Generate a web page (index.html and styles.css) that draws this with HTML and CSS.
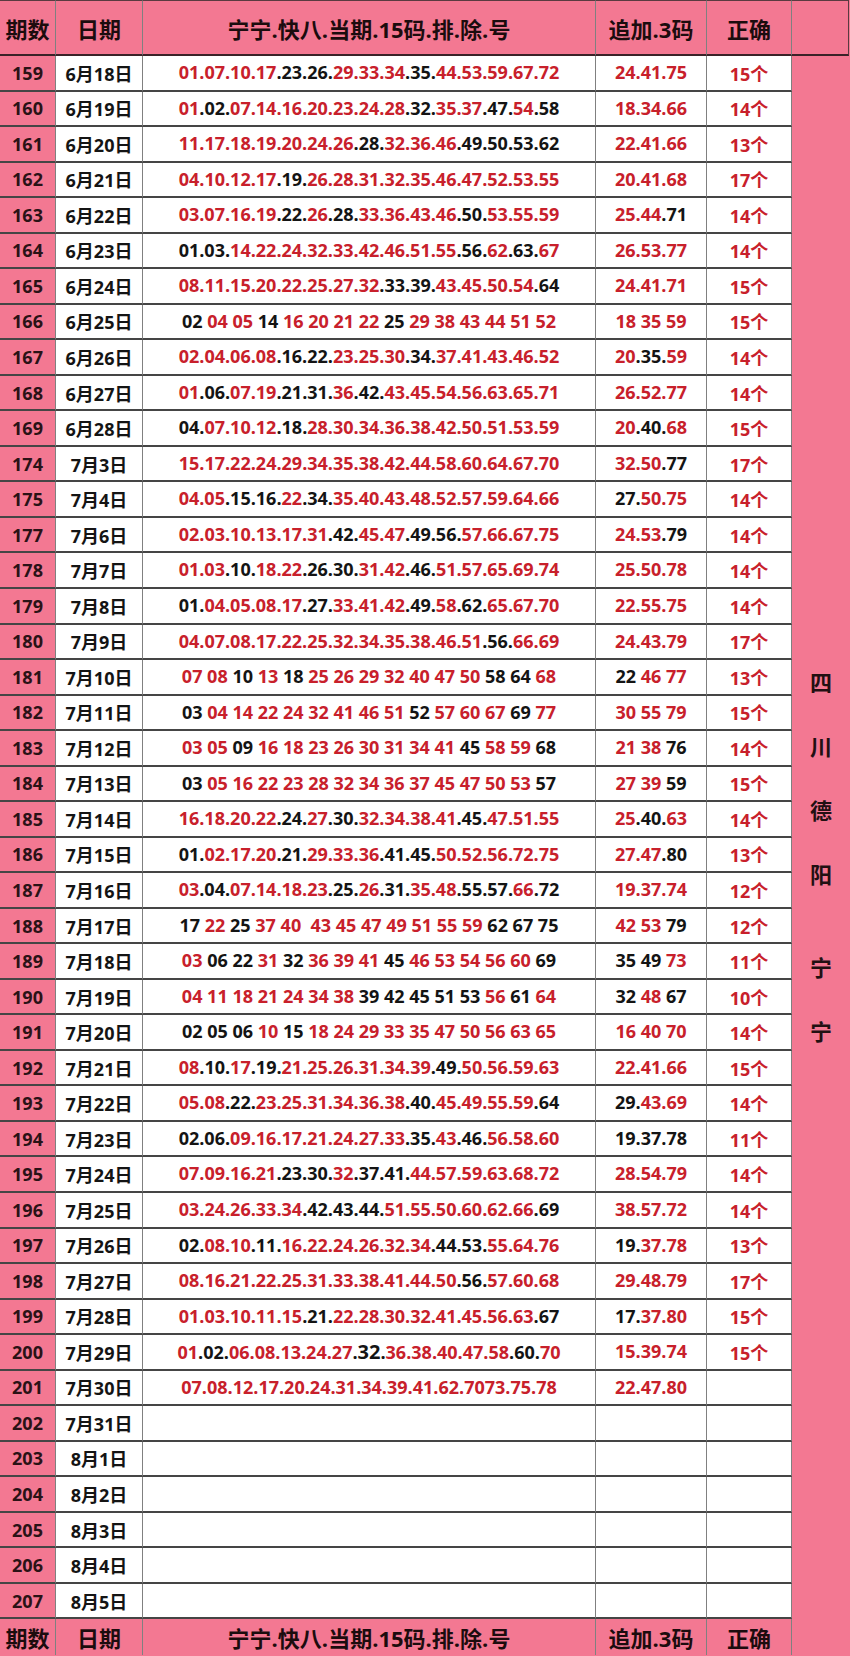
FILE: index.html
```html
<!DOCTYPE html>
<html lang="zh-CN">
<head>
<meta charset="utf-8">
<title>宁宁.快八.当期.15码.排.除.号</title>
<link rel="stylesheet" href="styles.css">
</head>
<body>
<div class="sheet">
  <div class="c hd">期数</div><div class="c hd">日期</div><div class="c hd">宁宁.快八.当期.15码.排.除.号</div><div class="c hd">追加.3码</div><div class="c hd">正确</div><div class="c hd hside"></div>

  <div class="side"><span>四</span><span>川</span><span>德</span><span>阳</span><span class="gap">宁</span><span>宁</span></div>

  <div class="c no">159</div><div class="c dt">6月18日</div><div class="c nums"><span class="r">01.07.10.17</span>.23.26.<span class="r">29.33.34</span>.35.<span class="r">44.53.59.67.72</span></div><div class="c add"><span class="r">24.41.75</span></div><div class="c ok">15个</div>
  <div class="c no">160</div><div class="c dt">6月19日</div><div class="c nums"><span class="r">01</span>.02.<span class="r">07.14.16.20.23.24.28</span>.32.<span class="r">35.37</span>.47.<span class="r">54</span>.58</div><div class="c add"><span class="r">18.34.66</span></div><div class="c ok">14个</div>
  <div class="c no">161</div><div class="c dt">6月20日</div><div class="c nums"><span class="r">11.17.18.19.20.24.26</span>.28.<span class="r">32.36.46</span>.49.50.53.62</div><div class="c add"><span class="r">22.41.66</span></div><div class="c ok">13个</div>
  <div class="c no">162</div><div class="c dt">6月21日</div><div class="c nums"><span class="r">04.10.12.17</span>.19.<span class="r">26.28.31.32.35.46.47.52.53.55</span></div><div class="c add"><span class="r">20.41.68</span></div><div class="c ok">17个</div>
  <div class="c no">163</div><div class="c dt">6月22日</div><div class="c nums"><span class="r">03.07.16.19</span>.22.<span class="r">26</span>.28.<span class="r">33.36.43.46</span>.50.<span class="r">53.55.59</span></div><div class="c add"><span class="r">25.44</span>.71</div><div class="c ok">14个</div>
  <div class="c no">164</div><div class="c dt">6月23日</div><div class="c nums">01.03.<span class="r">14.22.24.32.33.42.46.51.55</span>.56.<span class="r">62</span>.63.<span class="r">67</span></div><div class="c add"><span class="r">26.53.77</span></div><div class="c ok">14个</div>
  <div class="c no">165</div><div class="c dt">6月24日</div><div class="c nums"><span class="r">08.11.15.20.22.25.27.32</span>.33.39.<span class="r">43.45.50.54</span>.64</div><div class="c add"><span class="r">24.41.71</span></div><div class="c ok">15个</div>
  <div class="c no">166</div><div class="c dt">6月25日</div><div class="c nums">02 <span class="r">04 05</span> 14 <span class="r">16 20 21 22</span> 25 <span class="r">29 38 43 44 51 52</span></div><div class="c add"><span class="r">18 35 59</span></div><div class="c ok">15个</div>
  <div class="c no">167</div><div class="c dt">6月26日</div><div class="c nums"><span class="r">02.04.06.08</span>.16.22.<span class="r">23.25.30</span>.34.<span class="r">37.41.43.46.52</span></div><div class="c add"><span class="r">20</span>.35.<span class="r">59</span></div><div class="c ok">14个</div>
  <div class="c no">168</div><div class="c dt">6月27日</div><div class="c nums"><span class="r">01</span>.06.<span class="r">07.19</span>.21.31.<span class="r">36</span>.42.<span class="r">43.45.54.56.63.65.71</span></div><div class="c add"><span class="r">26.52.77</span></div><div class="c ok">14个</div>
  <div class="c no">169</div><div class="c dt">6月28日</div><div class="c nums">04.<span class="r">07.10.12</span>.18.<span class="r">28.30.34.36.38.42.50.51.53.59</span></div><div class="c add"><span class="r">20</span>.40.<span class="r">68</span></div><div class="c ok">15个</div>
  <div class="c no">174</div><div class="c dt">7月3日</div><div class="c nums"><span class="r">15.17.22.24.29.34.35.38.42.44.58.60.64.67.70</span></div><div class="c add"><span class="r">32.50</span>.77</div><div class="c ok">17个</div>
  <div class="c no">175</div><div class="c dt">7月4日</div><div class="c nums"><span class="r">04.05</span>.15.16.<span class="r">22</span>.34.<span class="r">35.40.43.48.52.57.59.64.66</span></div><div class="c add">27.<span class="r">50.75</span></div><div class="c ok">14个</div>
  <div class="c no">177</div><div class="c dt">7月6日</div><div class="c nums"><span class="r">02.03.10.13.17.31</span>.42.<span class="r">45.47</span>.49.56.<span class="r">57.66.67.75</span></div><div class="c add"><span class="r">24.53</span>.79</div><div class="c ok">14个</div>
  <div class="c no">178</div><div class="c dt">7月7日</div><div class="c nums"><span class="r">01.03</span>.10.<span class="r">18.22</span>.26.30.<span class="r">31.42</span>.46.<span class="r">51.57.65.69.74</span></div><div class="c add"><span class="r">25.50.78</span></div><div class="c ok">14个</div>
  <div class="c no">179</div><div class="c dt">7月8日</div><div class="c nums">01.<span class="r">04.05.08.17</span>.27.<span class="r">33.41.42</span>.49.<span class="r">58</span>.62.<span class="r">65.67.70</span></div><div class="c add"><span class="r">22.55.75</span></div><div class="c ok">14个</div>
  <div class="c no">180</div><div class="c dt">7月9日</div><div class="c nums"><span class="r">04.07.08.17.22.25.32.34.35.38.46.51</span>.56.<span class="r">66.69</span></div><div class="c add"><span class="r">24.43.79</span></div><div class="c ok">17个</div>
  <div class="c no">181</div><div class="c dt">7月10日</div><div class="c nums"><span class="r">07 08</span> 10 <span class="r">13</span> 18 <span class="r">25 26 29 32 40 47 50</span> 58 64 <span class="r">68</span></div><div class="c add">22 <span class="r">46 77</span></div><div class="c ok">13个</div>
  <div class="c no">182</div><div class="c dt">7月11日</div><div class="c nums">03 <span class="r">04 14 22 24 32 41 46 51</span> 52 <span class="r">57 60 67</span> 69 <span class="r">77</span></div><div class="c add"><span class="r">30 55 79</span></div><div class="c ok">15个</div>
  <div class="c no">183</div><div class="c dt">7月12日</div><div class="c nums"><span class="r">03 05</span> 09 <span class="r">16 18 23 26 30 31 34 41</span> 45 <span class="r">58 59</span> 68</div><div class="c add"><span class="r">21 38</span> 76</div><div class="c ok">14个</div>
  <div class="c no">184</div><div class="c dt">7月13日</div><div class="c nums">03 <span class="r">05 16 22 23 28 32 34 36 37 45 47 50 53</span> 57</div><div class="c add"><span class="r">27 39</span> 59</div><div class="c ok">15个</div>
  <div class="c no">185</div><div class="c dt">7月14日</div><div class="c nums"><span class="r">16.18.20.22</span>.24.<span class="r">27</span>.30.<span class="r">32.34.38.41</span>.45.<span class="r">47.51.55</span></div><div class="c add"><span class="r">25</span>.40.<span class="r">63</span></div><div class="c ok">14个</div>
  <div class="c no">186</div><div class="c dt">7月15日</div><div class="c nums">01.<span class="r">02.17.20</span>.21.<span class="r">29.33.36</span>.41.45.<span class="r">50.52.56.72.75</span></div><div class="c add"><span class="r">27.47</span>.80</div><div class="c ok">13个</div>
  <div class="c no">187</div><div class="c dt">7月16日</div><div class="c nums"><span class="r">03</span>.04.<span class="r">07.14.18.23</span>.25.<span class="r">26</span>.31.<span class="r">35.48</span>.55.57.<span class="r">66</span>.72</div><div class="c add"><span class="r">19.37.74</span></div><div class="c ok">12个</div>
  <div class="c no">188</div><div class="c dt">7月17日</div><div class="c nums">17 <span class="r">22</span> 25 <span class="r">37 40&nbsp; 43 45 47 49 51 55 59</span> 62 67 75</div><div class="c add"><span class="r">42 53</span> 79</div><div class="c ok">12个</div>
  <div class="c no">189</div><div class="c dt">7月18日</div><div class="c nums"><span class="r">03</span> 06 22 <span class="r">31</span> 32 <span class="r">36 39 41</span> 45 <span class="r">46 53 54 56 60</span> 69</div><div class="c add">35 49 <span class="r">73</span></div><div class="c ok">11个</div>
  <div class="c no">190</div><div class="c dt">7月19日</div><div class="c nums"><span class="r">04 11 18 21 24 34 38</span> 39 42 45 51 53 <span class="r">56</span> 61 <span class="r">64</span></div><div class="c add">32 <span class="r">48</span> 67</div><div class="c ok">10个</div>
  <div class="c no">191</div><div class="c dt">7月20日</div><div class="c nums">02 05 06 <span class="r">10</span> 15 <span class="r">18 24 29 33 35 47 50 56 63 65</span></div><div class="c add"><span class="r">16 40 70</span></div><div class="c ok">14个</div>
  <div class="c no">192</div><div class="c dt">7月21日</div><div class="c nums"><span class="r">08</span>.10.<span class="r">17</span>.19.<span class="r">21.25.26.31.34.39</span>.49.<span class="r">50.56.59.63</span></div><div class="c add"><span class="r">22.41.66</span></div><div class="c ok">15个</div>
  <div class="c no">193</div><div class="c dt">7月22日</div><div class="c nums"><span class="r">05.08</span>.22.<span class="r">23.25.31.34.36.38</span>.40.<span class="r">45.49.55.59</span>.64</div><div class="c add">29.<span class="r">43.69</span></div><div class="c ok">14个</div>
  <div class="c no">194</div><div class="c dt">7月23日</div><div class="c nums">02.06.<span class="r">09.16.17.21.24.27.33</span>.35.<span class="r">43</span>.46.<span class="r">56.58.60</span></div><div class="c add">19.37.78</div><div class="c ok">11个</div>
  <div class="c no">195</div><div class="c dt">7月24日</div><div class="c nums"><span class="r">07.09.16.21</span>.23.30.<span class="r">32</span>.37.41.<span class="r">44.57.59.63.68.72</span></div><div class="c add"><span class="r">28.54.79</span></div><div class="c ok">14个</div>
  <div class="c no">196</div><div class="c dt">7月25日</div><div class="c nums"><span class="r">03.24.26.33.34</span>.42.43.44.<span class="r">51.55.50.60.62.66</span>.69</div><div class="c add"><span class="r">38.57.72</span></div><div class="c ok">14个</div>
  <div class="c no">197</div><div class="c dt">7月26日</div><div class="c nums">02.<span class="r">08.10</span>.11.<span class="r">16.22.24.26.32.34</span>.44.53.<span class="r">55.64.76</span></div><div class="c add">19.<span class="r">37.78</span></div><div class="c ok">13个</div>
  <div class="c no">198</div><div class="c dt">7月27日</div><div class="c nums"><span class="r">08.16.21.22.25.31.33.38.41.44.50</span>.56.<span class="r">57.60.68</span></div><div class="c add"><span class="r">29.48.79</span></div><div class="c ok">17个</div>
  <div class="c no">199</div><div class="c dt">7月28日</div><div class="c nums"><span class="r">01.03.10.11.15</span>.21.<span class="r">22.28.30.32.41.45.56.63</span>.67</div><div class="c add">17.<span class="r">37.80</span></div><div class="c ok">15个</div>
  <div class="c no">200</div><div class="c dt">7月29日</div><div class="c nums"><span class="r">01</span>.02.<span class="r">06.08.13.24.27</span>.<span class="big">32</span>.<span class="r">36.38.40.47.58</span>.60.<span class="r">70</span></div><div class="c add"><span class="r">15.39.74</span></div><div class="c ok">15个</div>
  <div class="c no">201</div><div class="c dt">7月30日</div><div class="c nums"><span class="r">07.08.12.17.20.24.31.34.39.41.62.7073.75.78</span></div><div class="c add"><span class="r">22.47.80</span></div><div class="c ok"></div>
  <div class="c no">202</div><div class="c dt">7月31日</div><div class="c nums"></div><div class="c add"></div><div class="c ok"></div>
  <div class="c no">203</div><div class="c dt">8月1日</div><div class="c nums"></div><div class="c add"></div><div class="c ok"></div>
  <div class="c no">204</div><div class="c dt">8月2日</div><div class="c nums"></div><div class="c add"></div><div class="c ok"></div>
  <div class="c no">205</div><div class="c dt">8月3日</div><div class="c nums"></div><div class="c add"></div><div class="c ok"></div>
  <div class="c no">206</div><div class="c dt">8月4日</div><div class="c nums"></div><div class="c add"></div><div class="c ok"></div>
  <div class="c no">207</div><div class="c dt">8月5日</div><div class="c nums"></div><div class="c add"></div><div class="c ok"></div>

  <div class="c ft">期数</div><div class="c ft">日期</div><div class="c ft">宁宁.快八.当期.15码.排.除.号</div><div class="c ft">追加.3码</div><div class="c ft">正确</div>
</div>
</body>
</html>
```

FILE: styles.css
```css
* {
  box-sizing: border-box;
}

html,
body {
  margin: 0;
  padding: 0;
}

body {
  background: #f37892;
  font-family: "Open Sans", "Noto Sans CJK SC", sans-serif;
}

.sheet {
  display: grid;
  grid-template-columns: 56px 87px 453px 111px 85px 58px;
  grid-template-rows: 56px repeat(44, 35.545px) 36px;
  width: 850px;
  height: 1656px;
  background: #f37892;
  color: #141414;
  font-weight: 700;
}

.c {
  display: flex;
  align-items: center;
  justify-content: center;
  background: #ffffff;
  border-right: 1px solid #808080;
  border-bottom: 2px solid #454545;
  font-size: 18px;
  white-space: nowrap;
  overflow: hidden;
}

.nums,
.add {
  display: block;
  text-align: center;
  line-height: 33px;
}

.hd {
  background: #f37892;
  color: #1c0c0e;
  font-size: 22px;
  border-top: 1px solid #5a3a40;
  border-bottom: 2px solid #3a2228;
}

.hside {
  border-right: 1px solid #5a3a40;
  margin-right: 1px;
}

.ft {
  background: #f37892;
  color: #1c0c0e;
  font-size: 22px;
  border-bottom: none;
}

.no {
  background: #f37892;
  color: #2a1216;
}

.dt {
  color: #141414;
}

.r {
  color: #c8202b;
}

.ok {
  color: #c8202b;
}

.big {
  font-size: 20px;
}

.side {
  grid-column: 6;
  grid-row: 2 / -1;
  background: #f37892;
  display: flex;
  flex-direction: column;
  align-items: center;
  justify-content: center;
  color: #221012;
  font-size: 22px;
  font-family: "Noto Sans CJK SC", sans-serif;
}

.side span {
  display: block;
  line-height: 64px;
}

.side .gap {
  margin-top: 29px;
}
```
